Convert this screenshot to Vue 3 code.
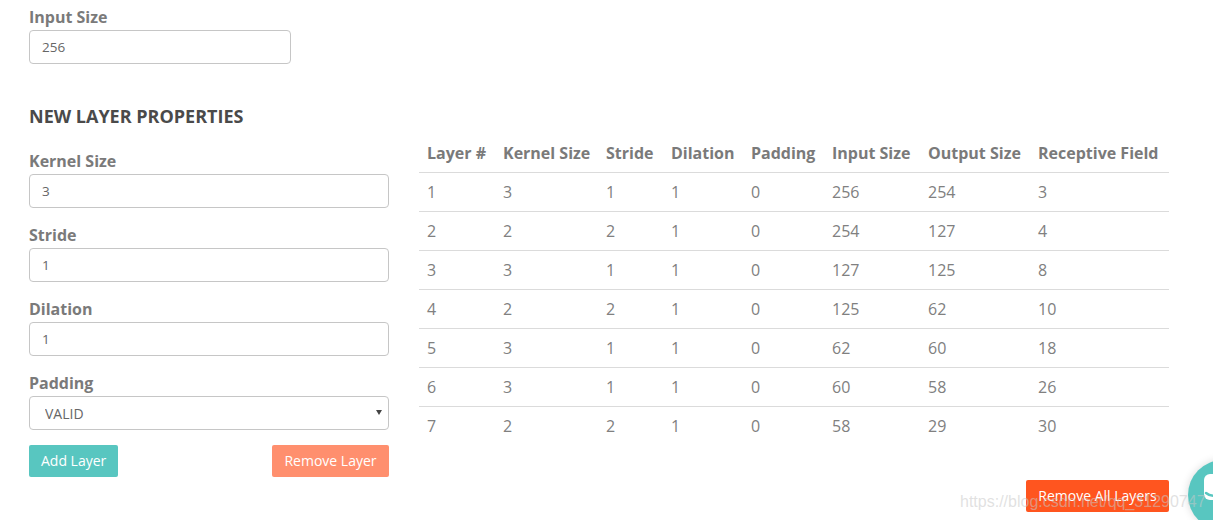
<template>
  <div class="page">
    <div class="field input-size">
      <label>Input Size</label>
      <input value="256" />
    </div>

    <h3>NEW LAYER PROPERTIES</h3>

    <div class="columns">
      <div class="form">
        <div class="field" v-for="f in fields" :key="f.label">
          <label>{{ f.label }}</label>
          <input :value="f.value" />
        </div>
        <div class="field">
          <label>Padding</label>
          <div class="select-wrap">
            <select>
              <option>VALID</option>
              <option>SAME</option>
            </select>
          </div>
        </div>
        <div class="buttons">
          <button class="add">Add Layer</button>
          <button class="remove">Remove Layer</button>
        </div>
      </div>

      <div class="results">
        <table>
          <colgroup>
            <col v-for="w in widths" :key="w" :style="{ width: w + 'px' }" />
          </colgroup>
          <thead>
            <tr>
              <th v-for="h in headers" :key="h">{{ h }}</th>
            </tr>
          </thead>
          <tbody>
            <tr v-for="(row, idx) in rows" :key="idx">
              <td v-for="(val, i) in row" :key="i">{{ val }}</td>
            </tr>
          </tbody>
        </table>
        <div class="table-actions">
          <button class="remove-all">Remove All Layers</button>
        </div>
      </div>
    </div>

    <div class="chat-bubble">
      <svg width="34" height="34" viewBox="0 0 34 34">
        <rect x="2" y="2" width="30" height="26" rx="6" fill="#fff" />
        <path d="M4 21 Q10 26 18 22" fill="none" stroke="#58c6c0" stroke-width="2.5" stroke-linecap="round" />
      </svg>
    </div>
    <div class="watermark">https://blog.csdn.net/qq_31290747</div>
  </div>
</template>

<script setup>
const fields = [
  { label: 'Kernel Size', value: '3' },
  { label: 'Stride', value: '1' },
  { label: 'Dilation', value: '1' }
]
const widths = [76, 103, 65, 80, 81, 96, 110, 139]
const headers = ['Layer #', 'Kernel Size', 'Stride', 'Dilation', 'Padding', 'Input Size', 'Output Size', 'Receptive Field']
const rows = [
  [1, 3, 1, 1, 0, 256, 254, 3],
  [2, 2, 2, 1, 0, 254, 127, 4],
  [3, 3, 1, 1, 0, 127, 125, 8],
  [4, 2, 2, 1, 0, 125, 62, 10],
  [5, 3, 1, 1, 0, 62, 60, 18],
  [6, 3, 1, 1, 0, 60, 58, 26],
  [7, 2, 2, 1, 0, 58, 29, 30]
]
</script>

<style>
html, body {
  margin: 0;
  height: 520px;
  overflow: hidden;
  background: #fff;
}
</style>

<style scoped>
.page {
  position: relative;
  width: 1213px;
  height: 520px;
  overflow: hidden;
  box-sizing: border-box;
  padding: 6px 44px 0 29px;
  font-family: "Open Sans", sans-serif;
  color: #808080;
  font-size: 16px;
}
.field {
  display: flex;
  flex-direction: column;
  margin-bottom: 16px;
}
.field label {
  font-size: 16px;
  font-weight: 700;
  line-height: 22px;
  color: #7a7a7a;
  margin-bottom: 2px;
}
.input-size {
  width: 262px;
  margin-bottom: 0;
}
input, select {
  box-sizing: border-box;
  width: 100%;
  height: 34px;
  border: 1px solid #c6c6c6;
  border-radius: 4px;
  background: #fff;
  color: #666;
  font-family: inherit;
  font-size: 13.5px;
  padding: 0 12px;
  outline: none;
}
.select-wrap {
  position: relative;
}
.select-wrap::after {
  content: "";
  position: absolute;
  right: 7px;
  top: 14px;
  border-left: 3px solid transparent;
  border-right: 3px solid transparent;
  border-top: 5px solid #444;
}
select {
  appearance: none;
  padding-left: 15px;
  font-size: 14px;
  display: block;
}
h3 {
  margin: 39px 0 21px;
  font-size: 18px;
  line-height: 26px;
  font-weight: 700;
  color: #4a4a4a;
}
.columns {
  display: flex;
  gap: 30px;
}
.form {
  width: 360px;
  flex: none;
}
.buttons {
  display: flex;
  justify-content: space-between;
  margin-top: -1px;
}
button {
  border: none;
  border-radius: 2px;
  height: 32px;
  padding: 0 12px 2px;
  color: #fff;
  font-family: inherit;
  font-size: 14px;
  cursor: pointer;
}
.add {
  background: #58c6c0;
}
.remove {
  background: #ff8f6e;
  width: 117px;
  padding: 0 0 2px;
}
.results {
  flex: 1;
}
table {
  width: 750px;
  table-layout: fixed;
  border-collapse: collapse;
  margin-top: -16px;
}
th {
  text-align: left;
  font-weight: 700;
  color: #7a7a7a;
  white-space: nowrap;
  height: 38px;
  padding: 0 0 0 8px;
  border-bottom: 1px solid #dbdbdb;
}
td {
  height: 38px;
  padding: 0 0 0 8px;
  border-bottom: 1px solid #dbdbdb;
}
tbody tr:last-child td {
  border-bottom: none;
}
.table-actions {
  display: flex;
  justify-content: flex-end;
  margin-top: 35px;
}
.remove-all {
  background: #ff551f;
  width: 143px;
  padding: 0 0 2px;
}
.chat-bubble {
  position: absolute;
  left: 1188px;
  top: 460px;
  width: 70px;
  height: 70px;
  border-radius: 50%;
  background: #58c6c0;
  box-shadow: 0 0 8px rgba(0, 0, 0, 0.15);
  padding: 12px 0 0 14px;
  box-sizing: border-box;
}
.watermark {
  position: absolute;
  left: 960px;
  top: 491px;
  font-family: "Liberation Sans", sans-serif;
  font-size: 16px;
  line-height: 22px;
  color: rgba(200, 200, 200, 0.55);
  white-space: nowrap;
}
</style>
